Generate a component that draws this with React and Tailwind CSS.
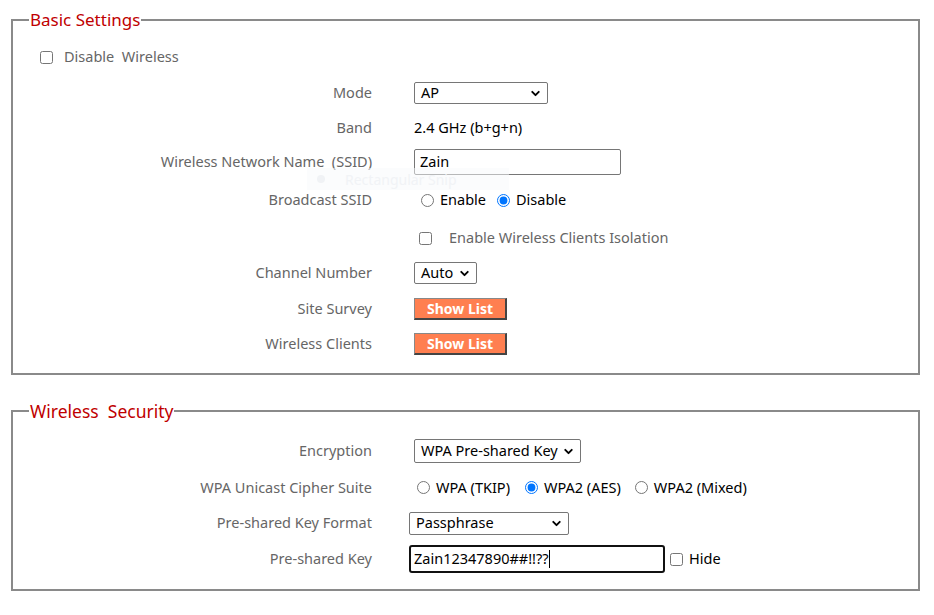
import { ChevronDown } from 'lucide-react'

const font = { fontFamily: '"Noto Sans", "Open Sans", sans-serif' }

const Select = ({ value, className = '' }) => (
  <div className={`relative flex items-center border border-[#767676] rounded-[2px] bg-white text-black ${className}`}>
    <span className="pl-[6px] whitespace-nowrap">{value}</span>
    <ChevronDown className="absolute right-[5px] w-[13px] h-[13px] text-black" strokeWidth={3.5} />
  </div>
)

const Row = ({ label, h, children }) => (
  <div className={`flex items-center ${h}`}>
    <div className="w-[359px] text-right text-[#666] text-[14.5px] whitespace-pre">{label}</div>
    <div className="ml-[42px] flex items-center text-[14.5px] text-black">{children}</div>
  </div>
)

const Radio = ({ checked, label, className = '' }) => (
  <label className={`flex items-center ${className}`}>
    <input type="radio" defaultChecked={checked} className="m-0 w-[13px] h-[13px] accent-[#0075ff]" />
    <span className="ml-[6px]">{label}</span>
  </label>
)

const ShowList = () => (
  <button className="w-[93px] h-[22px] bg-[#ff7f50] text-white font-bold text-[14px] border-t border-l border-t-[#888] border-l-[#888] border-r-2 border-b-2 border-r-[#444] border-b-[#444] leading-none">
    Show List
  </button>
)

export default function App() {
  return (
    <div className="relative bg-white w-[934px] h-[615px] pt-[8px] px-[11px]" style={font}>
      <fieldset className="border-2 border-[#8a8a8a] w-[909px] pt-[7px] pb-[12px]">
        <legend className="ml-[16px] px-[1px] text-[#c00000] text-[17px] leading-[24px]">Basic Settings</legend>
        <div className="flex items-center h-[36px] pl-[27px] text-[14.5px] text-[#666]">
          <input type="checkbox" className="m-0 w-[13px] h-[13px]" />
          <span className="ml-[11px] whitespace-pre">Disable  Wireless</span>
        </div>
        <Row label="Mode" h="h-[36px]">
          <Select value="AP" className="w-[134px] h-[22px]" />
        </Row>
        <Row label="Band" h="h-[34px]">
          <span>2.4 GHz (b+g+n)</span>
        </Row>
        <Row label="Wireless Network Name  (SSID)" h="h-[34px]">
          <div className="w-[207px] h-[26px] border border-[#767676] rounded-[2px] flex items-center pl-[5px]">Zain</div>
        </Row>
        <Row label="Broadcast SSID" h="h-[42px]">
          <Radio label="Enable" className="ml-[7px]" />
          <Radio checked label="Disable" className="ml-[11px]" />
        </Row>
        <Row label="" h="h-[34px]">
          <label className="flex items-center ml-[5px] text-[#666]">
            <input type="checkbox" className="m-0 w-[13px] h-[13px]" />
            <span className="ml-[17px]">Enable Wireless Clients Isolation</span>
          </label>
        </Row>
        <Row label="Channel Number" h="h-[36px]">
          <Select value="Auto" className="w-[63px] h-[22px]" />
        </Row>
        <Row label="Site Survey" h="h-[36px]">
          <ShowList />
        </Row>
        <Row label="Wireless Clients" h="h-[34px]">
          <ShowList />
        </Row>
      </fieldset>

      <fieldset className="border-2 border-[#8a8a8a] w-[909px] mt-[24px] pb-[11px]">
        <legend className="ml-[16px] px-[1px] text-[#c00000] text-[17.5px] leading-[24px] whitespace-pre">Wireless  Security</legend>
        <div className="h-[10px]" />
        <Row label="Encryption" h="h-[36px]">
          <Select value="WPA Pre-shared Key" className="w-[167px] h-[24px]" />
        </Row>
        <Row label="WPA Unicast Cipher Suite" h="h-[37px]">
          <Radio label="WPA (TKIP)" className="ml-[3px]" />
          <Radio checked label="WPA2 (AES)" className="ml-[15px]" />
          <Radio label="WPA2 (Mixed)" className="ml-[14px]" />
        </Row>
        <Row label="Pre-shared Key Format" h="h-[34px]">
          <Select value="Passphrase" className="-ml-[5px] w-[160px] h-[23px]" />
        </Row>
        <Row label="Pre-shared Key" h="h-[38px]">
          <div className="-ml-[5px] w-[256px] h-[28px] border-2 border-[#111] rounded-[3px] flex items-center pl-[3px]">
            Zain12347890##!!??<span className="w-px h-[18px] bg-black" />
          </div>
          <label className="flex items-center ml-[5px]">
            <input type="checkbox" className="m-0 w-[13px] h-[13px]" />
            <span className="ml-[6px]">Hide</span>
          </label>
        </Row>
      </fieldset>

      <div className="absolute left-[307px] top-[168px] w-[202px] h-[22px] bg-[#f7f9fc]/50 flex items-center pl-[10px] text-[14px] text-[#f1f3f6]">
        <span className="w-[8px] h-[8px] rounded-full bg-[#f0f2f5] mr-[20px]" />
        Rectangular Snip
      </div>
    </div>
  )
}
